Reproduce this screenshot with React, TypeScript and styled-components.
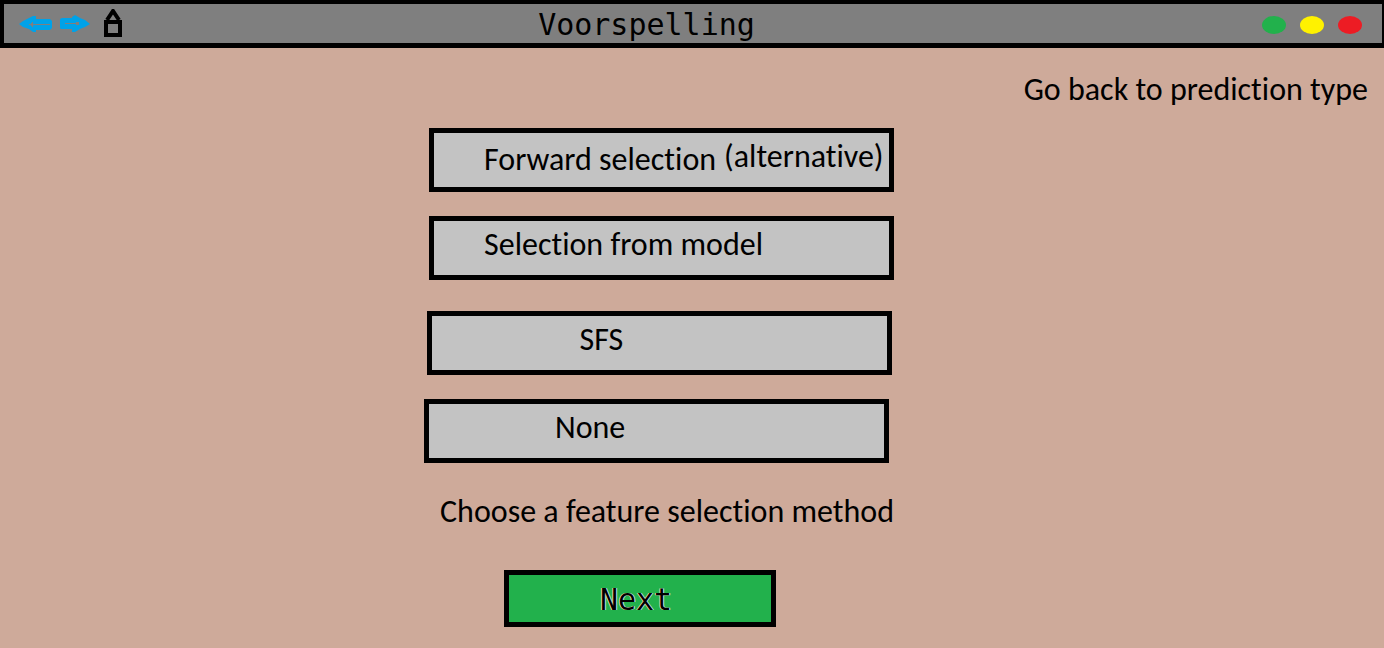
import React from "react";
import styled, { createGlobalStyle } from "styled-components";

const GlobalStyle = createGlobalStyle`
  *, *::before, *::after { box-sizing: border-box; }
  html, body, #root { min-height: 100vh; }
  body {
    margin: 0;
    background: #ceaa9a;
    color: #000;
    font-family: Carlito, Calibri, Lato, sans-serif;
    font-size: 32px;
    line-height: 36px;
    font-variant-ligatures: none;
  }
  button { font: inherit; color: inherit; cursor: pointer; }
`;

const Page = styled.div`
  display: flex;
  flex-direction: column;
  min-height: 100vh;
`;

const TitleBar = styled.header`
  display: grid;
  grid-template-columns: 1fr auto 1fr;
  align-items: center;
  height: 48px;
  padding: 0 20px 0 15px;
  background: #7f7f7f;
  border: solid #000;
  border-width: 4px 2px 5px 4px;
`;

const Navigation = styled.nav`
  display: flex;
  align-items: center;
  gap: 8px;
`;

const IconButton = styled.button<{ $spaced?: boolean }>`
  display: flex;
  padding: 0;
  border: 0;
  background: none;
  margin-left: ${(p) => (p.$spaced ? "6px" : "0")};
`;

const Title = styled.h1`
  margin: 0 88px 0 0;
  padding-top: 3px;
  font-family: "DejaVu Sans Mono", monospace;
  font-size: 30px;
  line-height: 36px;
  font-weight: 400;
`;

const WindowControls = styled.div`
  display: flex;
  justify-content: flex-end;
  align-items: center;
  gap: 14px;
  padding-top: 3px;
`;

const WindowButton = styled.button<{ $color: string }>`
  width: 24px;
  height: 18px;
  padding: 0;
  border: 0;
  border-radius: 50%;
  background: ${(p) => p.$color};
`;

const Main = styled.main`
  display: flex;
  flex-direction: column;
  padding: 24px 16px 20px;
`;

const BackLink = styled.a`
  align-self: flex-end;
  color: inherit;
  text-decoration: none;
`;

const ChooserArea = styled.div`
  padding-right: 66px;
`;

const Chooser = styled.section`
  display: flex;
  flex-direction: column;
  width: 470px;
  max-width: 100%;
  margin: 20px auto 0;
`;

const Options = styled.div`
  display: flex;
  flex-direction: column;
  gap: 31px;
`;

const OptionPair = styled.div`
  display: flex;
  flex-direction: column;
  gap: 24px;
`;

const Option = styled.button<{
  $side: "flex-start" | "center" | "flex-end";
  $indent: number;
}>`
  display: flex;
  align-self: ${(p) => p.$side};
  align-items: flex-start;
  gap: 8px;
  width: 465px;
  max-width: 100%;
  height: 64px;
  padding: 6px 0 0 ${(p) => p.$indent}px;
  background: #c3c3c3;
  border: 5px solid #000;
  text-align: left;
  white-space: nowrap;
`;

const OptionName = styled.span<{ $low?: boolean }>`
  padding-top: ${(p) => (p.$low ? "3px" : "0")};
`;

const Hint = styled.p`
  margin: 31px 0 0;
  text-align: right;
  white-space: nowrap;
`;

const NextButton = styled.button`
  width: 272px;
  height: 57px;
  margin: 40px 0 0 80px;
  padding: 2px 8px 0 0;
  background: #22b14c;
  border: 5px solid #000;
  font-family: "DejaVu Sans Mono", monospace;
  font-size: 30px;
  line-height: 36px;
  text-shadow: -1px 0 #f3d9a4, 1px 0 #b4e4f4;
`;

const BackArrow = () => (
  <svg width="33" height="18" viewBox="0 0 33 18" aria-hidden="true">
    <path d="M0 9 4 6 10 3 14 1H17V4H31L33 6V13L31 15H17V17H14L10 14 4 12Z" fill="#00a2e8" />
    <path d="M10 9H12V8H13V7H14V9H31V10H14V12H13V11H12V10H10Z" fill="#7f7f7f" />
  </svg>
);

const ForwardArrow = () => (
  <svg width="30" height="18" viewBox="0 0 30 18" aria-hidden="true">
    <path d="M0 4 2 3H12V2L15 0 20 3 25 5 30 9 25 12 20 14 15 17H12V14H1L0 13Z" fill="#00a2e8" />
    <path d="M5 8H16V7H19V10H16V9H5Z" fill="#7f7f7f" />
  </svg>
);

const HomeIcon = () => (
  <svg width="18" height="30" viewBox="0 0 18 30" fill="none" stroke="#000" aria-hidden="true">
    <path d="M2 13H16V26H2Z" strokeWidth="4" />
    <path d="M3 11 9 2 15 11" strokeWidth="4" />
  </svg>
);

export default function App() {
  return (
    <Page>
      <GlobalStyle />
      <TitleBar>
        <Navigation aria-label="History">
          <IconButton type="button" aria-label="Back"><BackArrow /></IconButton>
          <IconButton type="button" aria-label="Forward"><ForwardArrow /></IconButton>
          <IconButton type="button" aria-label="Home" $spaced><HomeIcon /></IconButton>
        </Navigation>
        <Title>Voorspelling</Title>
        <WindowControls>
          <WindowButton type="button" aria-label="Minimize" $color="#22b14c" />
          <WindowButton type="button" aria-label="Maximize" $color="#fff200" />
          <WindowButton type="button" aria-label="Close" $color="#ed1c24" />
        </WindowControls>
      </TitleBar>
      <Main>
        <BackLink href="#prediction-type">Go back to prediction type</BackLink>
        <ChooserArea>
          <Chooser>
            <Options>
              <OptionPair>
                <Option type="button" $side="flex-end" $indent={50}>
                  <OptionName $low>Forward selection</OptionName>
                  <OptionName>(alternative)</OptionName>
                </Option>
                <Option type="button" $side="flex-end" $indent={50}>
                  <OptionName>Selection from model</OptionName>
                </Option>
              </OptionPair>
              <OptionPair>
                <Option type="button" $side="center" $indent={148}>
                  <OptionName>SFS</OptionName>
                </Option>
                <Option type="button" $side="flex-start" $indent={126}>
                  <OptionName>None</OptionName>
                </Option>
              </OptionPair>
            </Options>
            <Hint>Choose a feature selection method</Hint>
            <NextButton type="button">Next</NextButton>
          </Chooser>
        </ChooserArea>
      </Main>
    </Page>
  );
}
